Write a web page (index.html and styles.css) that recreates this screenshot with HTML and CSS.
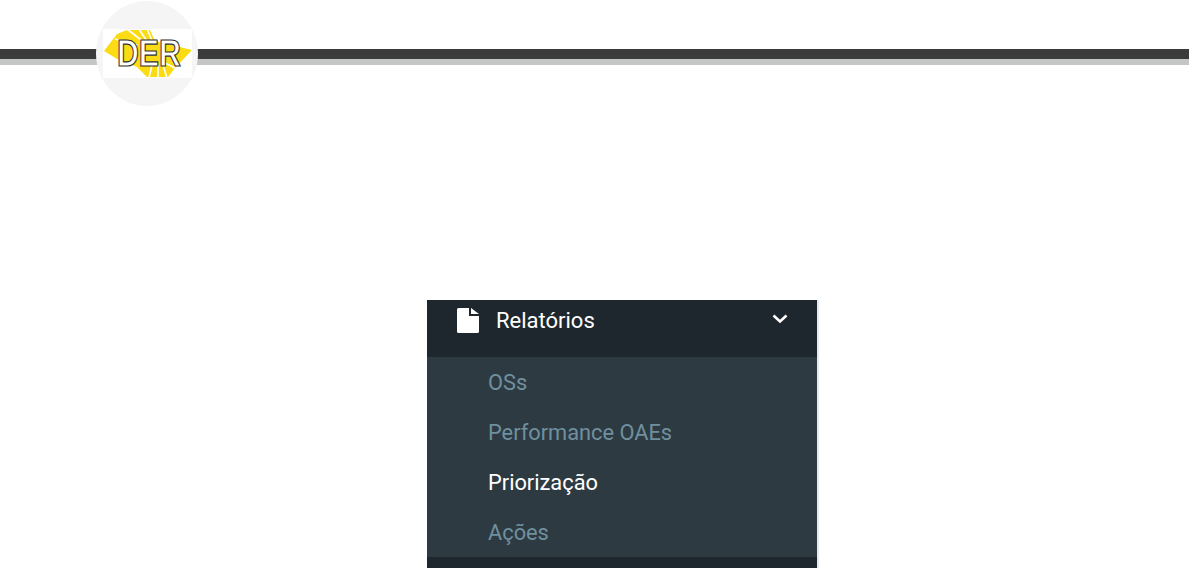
FILE: index.html
```html
<!DOCTYPE html>
<html lang="pt-BR">
<head>
    <meta charset="UTF-8">
    <title>Relatórios</title>
    <link rel="stylesheet" href="styles.css">
</head>
<body>
    <header class="banner">
        <div class="bar"></div>
        <div class="logo-circle">
            <div class="logo">
                <svg class="logo-shape" viewBox="0 0 89 49" width="89" height="49">
                    <path fill="#fbdc14" d="M1 22 L14 5 L24 1 L47 1 L52 12 L89 21 L72 39 L65 48 L44 48 L34 38 L14 30 Z"/>
                    <path stroke="#fff" stroke-width="1.6" fill="none" d="M12 10 L34 16 M24 0 L42 14 M36 0 L45 14 M44 0 L50 14 M46 49 L49 36 M55 49 L55 36 M64 49 L60 36 M72 39 L62 34"/>
                </svg>
                <span class="logo-text">DER</span>
            </div>
        </div>
    </header>

    <nav class="menu">
        <div class="menu-head">
            <svg class="doc-icon" viewBox="0 0 22 25" width="22" height="25">
                <path fill="#fff" d="M0 1.5 Q0 0 1.5 0 H12 V8 H22 V23.5 Q22 25 20.5 25 H1.5 Q0 25 0 23.5 Z M14 0 L22 6 H14 Z"/>
            </svg>
            <span class="menu-title">Relatórios</span>
            <svg class="chevron" viewBox="0 0 16 10" width="16" height="10">
                <path fill="none" stroke="#fff" stroke-width="2.6" d="M1.5 1.5 L8 7.5 L14.5 1.5"/>
            </svg>
        </div>
        <ul class="submenu">
            <li>OSs</li>
            <li>Performance OAEs</li>
            <li class="active">Priorização</li>
            <li>Ações</li>
        </ul>
        <div class="menu-foot"></div>
    </nav>
</body>
</html>
```

FILE: styles.css
```css
html, body { margin: 0; padding: 0; }
body { background: #fff; font-family: Roboto, "Open Sans", sans-serif; height: 568px; overflow: hidden; }

.banner { position: relative; height: 300px; padding-top: 49px; box-sizing: border-box; }
.bar { height: 10px; background: #3b3b3b; border-bottom: 6px solid #c4c5c5; }

.logo-circle { position: absolute; left: 96px; top: 1px; width: 102px; height: 105px; border-radius: 50%; background: #f5f5f5; display: flex; justify-content: center; padding-top: 28px; box-sizing: border-box; }
.logo { position: relative; width: 89px; height: 49px; background: #fff; }
.logo-shape { display: block; }
.logo-text { position: absolute; left: 14px; top: 7px; font-family: "Liberation Sans", sans-serif; font-weight: bold; font-size: 36px; line-height: 36px; color: #fff; -webkit-text-stroke: 1.2px #333; transform: scaleX(.84); transform-origin: left center; }

.menu { margin-left: 427px; width: 390px; height: 268px; background: #1f272e; border-right: 2px solid #e6eaee; display: flex; flex-direction: column; }
.menu-head { height: 57px; flex: none; display: flex; align-items: center; padding: 0 29px 17px 30px; box-sizing: border-box; color: #fff; }
.doc-icon { flex: none; }
.menu-title { font-size: 22px; margin-left: 17px; flex: 1; }
.chevron { flex: none; margin-top: -2px; }

.submenu { list-style: none; margin: 0; padding: 0 0 0 61px; height: 200px; flex: none; background: #2e3a42; color: #6f909e; font-size: 21.8px; }
.submenu li { height: 50px; line-height: 51px; }
.submenu .active { color: #fff; }
.menu-foot { flex: 1; }
```
